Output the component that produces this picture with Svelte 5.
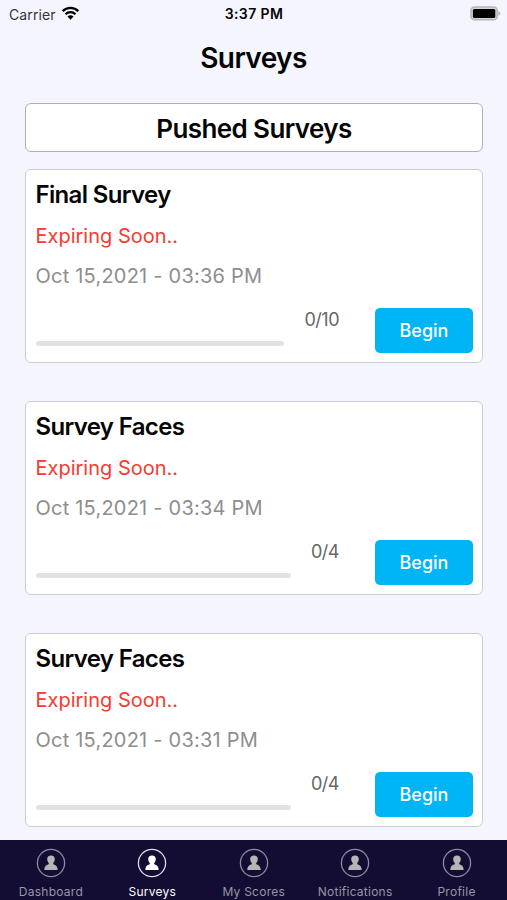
<script lang="ts">
  interface Survey {
    title: string;
    date: string;
    done: number;
    total: number;
  }

  const surveys: Survey[] = [
    { title: 'Final Survey', date: 'Oct 15,2021 - 03:36 PM', done: 0, total: 10 },
    { title: 'Survey Faces', date: 'Oct 15,2021 - 03:34 PM', done: 0, total: 4 },
    { title: 'Survey Faces', date: 'Oct 15,2021 - 03:31 PM', done: 0, total: 4 }
  ];

  const tabs = ['Dashboard', 'Surveys', 'My Scores', 'Notifications', 'Profile'];

  let active = $state('Surveys');
</script>

<div class="screen">
  <header class="status">
    <div class="carrier">
      <span>Carrier</span>
      <svg width="19" height="14" viewBox="0 0 18 14">
        <path d="M1.2 5.1a11.1 11.1 0 0 1 15.6 0" />
        <path d="M4 8.2a7.1 7.1 0 0 1 10 0" />
        <path class="dot" d="M9 13.7l-3-3.1a4.2 4.2 0 0 1 6 0z" />
      </svg>
    </div>
    <span class="time">3:37 PM</span>
    <div class="power">
      <svg width="31" height="15" viewBox="0 0 31 15">
        <rect x="1" y="1" width="26.2" height="12.8" rx="3.6" fill="#d5d6da" stroke="#b5b6ba" stroke-width="1.6" />
        <rect x="2.9" y="2.9" width="22.4" height="9" rx="1.5" fill="#000" />
        <path d="M28.4 5.1q2 .8 2 2.3t-2 2.3z" fill="#b5b6ba" />
      </svg>
    </div>
  </header>

  <h1>Surveys</h1>

  <main>
    <h2>Pushed Surveys</h2>

    {#each surveys as survey}
      <section class="card">
        <h3>{survey.title}</h3>
        <p class="expiring">Expiring Soon..</p>
        <p class="date">{survey.date}</p>
        <div class="bottom">
          <div class="track">
            <div class="fill" style="width: {(survey.done / survey.total) * 100}%"></div>
          </div>
          <span class="count">{survey.done}/{survey.total}</span>
          <button class="begin">Begin</button>
        </div>
      </section>
    {/each}
  </main>

  <nav>
    {#each tabs as tab}
      <button class="tab" class:active={active === tab} onclick={() => (active = tab)}>
        <svg width="30" height="30" viewBox="0 0 30 30">
          <circle cx="15" cy="15" r="13.6" />
          <path d="M15 7.4c-2.500 0-3.900 1.500-3.800 3.800.1 1.800.7 3 1.600 3.800v1.200c-2.300.8-4.300 1.600-4.500 5.900h13.400c-.2-4.300-2.200-5.100-4.500-5.900v-1.200c.9-.8 1.500-2 1.600-3.800.1-2.300-1.300-3.800-3.800-3.800z" />
        </svg>
        <span>{tab}</span>
      </button>
    {/each}
  </nav>
</div>

<style>
  :global(body) {
    background-color: #f4f5fe;
  }

  .screen {
    display: flex;
    flex-direction: column;
    height: 900px;
    overflow: hidden;
    background-color: #f4f5fe;
    font-family: Inter, "Liberation Sans", sans-serif;
    color: #050505;
  }

  h1,
  h2,
  h3,
  p {
    margin: 0;
  }

  button {
    padding: 0;
    border: none;
    font-family: inherit;
    cursor: pointer;
  }

  svg {
    display: block;
    flex: none;
  }

  .status {
    display: grid;
    grid-template-columns: 1fr auto 1fr;
    align-items: center;
    height: 28px;
    padding: 0 6px 0 9px;
    font-size: 14px;
  }

  .carrier {
    display: flex;
    align-items: center;
    gap: 6px;
    color: #333438;
    letter-spacing: 0.1px;
  }

  .carrier svg {
    margin: -3px 0 0 -1px;
    fill: none;
    stroke: #000000;
    stroke-width: 2.3;
  }

  .carrier .dot {
    fill: #000000;
    stroke: none;
  }

  .time {
    margin: -2px 2px 0 0;
    font-weight: 600;
    letter-spacing: 0.4px;
  }

  .power {
    display: flex;
    justify-content: flex-end;
    margin-top: -2px;
  }

  h1 {
    height: 75px;
    line-height: 61px;
    text-align: center;
    font-size: 28px;
    font-weight: 600;
    letter-spacing: -0.6px;
  }

  main {
    flex: 1;
    min-height: 0;
    padding: 0 24px 0 25px;
    overflow: hidden;
  }

  h2 {
    box-sizing: border-box;
    height: 49px;
    margin-bottom: 17px;
    border: 1px solid #aeafb3;
    border-radius: 6px;
    background-color: #ffffff;
    line-height: 49px;
    text-align: center;
    font-size: 26px;
    font-weight: 600;
    letter-spacing: -0.6px;
  }

  .card {
    box-sizing: border-box;
    height: 194px;
    margin-bottom: 38px;
    padding: 9px 9px 9px 9.5px;
    border: 1px solid #cccdd2;
    border-radius: 6px;
    background-color: #ffffff;
  }

  h3 {
    height: 37px;
    line-height: 32px;
    font-size: 24px;
    font-weight: 600;
    letter-spacing: -0.65px;
  }

  .expiring,
  .date {
    height: 40px;
    line-height: 40px;
    font-size: 20px;
  }

  .expiring {
    color: #f53b32;
  }

  .date {
    color: #8e8e8e;
    letter-spacing: 0.22px;
  }

  .bottom {
    display: flex;
    align-items: flex-start;
    margin-top: 12px;
  }

  .track {
    flex: 1;
    height: 5px;
    margin-top: 32.5px;
    border-radius: 3px;
    background-color: #e2e2e2;
  }

  .fill {
    height: 100%;
    border-radius: 3px;
    background-color: #00b5f5;
  }

  .count {
    margin: 0 36px 0 20px;
    line-height: 24px;
    font-size: 18px;
    letter-spacing: -0.5px;
    color: #666666;
  }

  .begin {
    width: 98px;
    height: 45px;
    border-radius: 5px;
    background-color: #00b5f5;
    font-size: 18px;
    font-weight: 500;
    color: #ffffff;
  }

  nav {
    display: grid;
    grid-template-columns: repeat(5, 1fr);
    height: 60px;
    background-color: #130d33;
  }

  .tab {
    display: flex;
    flex-direction: column;
    align-items: center;
    gap: 6px;
    padding: 8px 0 0 0.5px;
    background: none;
    font-size: 12px;
    line-height: 16px;
    letter-spacing: 0.25px;
    color: #9895a5;
  }

  .tab circle {
    fill: none;
    stroke: #8e8a9f;
    stroke-width: 1.3;
  }

  .tab path {
    fill: #b5b5b5;
  }

  .tab.active {
    color: #ffffff;
  }

  .tab.active circle {
    stroke: #dddce6;
  }

  .tab.active path {
    fill: #ffffff;
  }
</style>
